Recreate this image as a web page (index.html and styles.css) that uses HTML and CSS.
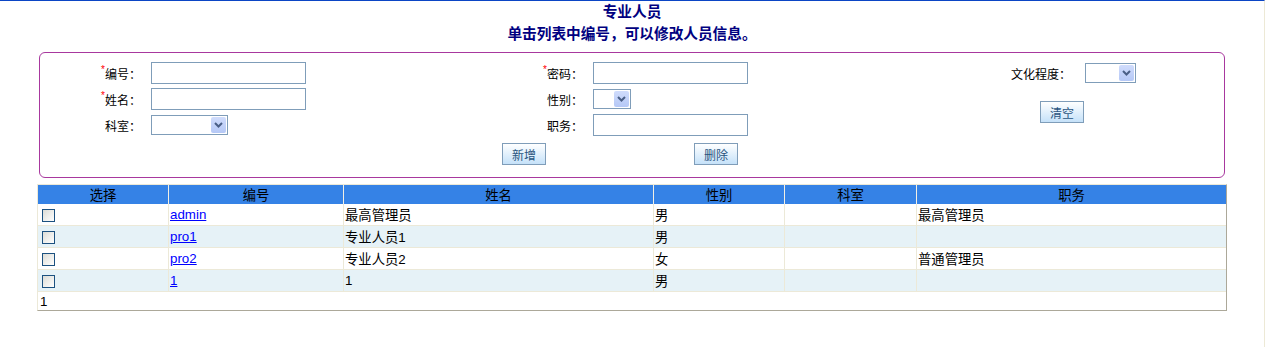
FILE: index.html
```html
<!DOCTYPE html>
<html lang="zh-CN">
  <head>
    <meta charset="utf-8" />
    <title>专业人员</title>
    <link rel="stylesheet" href="styles.css">
  </head>

  <body>
    <div class="page">
      <div class="title">专业人员</div>
      <div class="title">单击列表中编号，可以修改人员信息。</div>

      <form class="editor" onsubmit="return false">
        <label class="field-label c1"><span class="req">*</span>编号：</label>
        <div class="field c2"><input class="text-input" /></div>
        <label class="field-label c3"><span class="req">*</span>密码：</label>
        <div class="field c4"><input class="text-input" type="password" /></div>
        <label class="field-label wide c5">文化程度：</label>
        <div class="field c6">
          <span class="select select-edu"><span class="arrow"><svg width="9" height="6" viewBox="0 0 9 6"><path d="M1 1 L4.5 4.5 L8 1" fill="none" stroke="#4a5f86" stroke-width="2"/></svg></span></span>
        </div>

        <label class="field-label c1"><span class="req">*</span>姓名：</label>
        <div class="field c2"><input class="text-input" /></div>
        <label class="field-label c3">性别：</label>
        <div class="field c4">
          <span class="select select-sex"><span class="arrow"><svg width="9" height="6" viewBox="0 0 9 6"><path d="M1 1 L4.5 4.5 L8 1" fill="none" stroke="#4a5f86" stroke-width="2"/></svg></span></span>
        </div>
        <div class="clear-cell"><button class="btn" type="button">清空</button></div>

        <label class="field-label c1">科室：</label>
        <div class="field c2">
          <span class="select select-dept"><span class="arrow"><svg width="9" height="6" viewBox="0 0 9 6"><path d="M1 1 L4.5 4.5 L8 1" fill="none" stroke="#4a5f86" stroke-width="2"/></svg></span></span>
        </div>
        <label class="field-label c3">职务：</label>
        <div class="field c4"><input class="text-input" /></div>

        <div class="field c3 add-cell"><button class="btn" type="button">新增</button></div>
        <div class="field c4 del-cell"><button class="btn" type="button">删除</button></div>
      </form>

      <table class="staff">
        <thead>
          <tr>
            <th class="w-check">选择</th>
            <th class="w-id">编号</th>
            <th class="w-name">姓名</th>
            <th class="w-sex">性别</th>
            <th class="w-dept">科室</th>
            <th class="w-duty">职务</th>
          </tr>
        </thead>
        <tbody>
          <tr>
            <td class="check"><span class="checkbox"></span></td>
            <td><a href="#">admin</a></td>
            <td>最高管理员</td>
            <td>男</td>
            <td></td>
            <td>最高管理员</td>
          </tr>
          <tr class="alt">
            <td class="check"><span class="checkbox"></span></td>
            <td><a href="#">pro1</a></td>
            <td>专业人员1</td>
            <td>男</td>
            <td></td>
            <td></td>
          </tr>
          <tr>
            <td class="check"><span class="checkbox"></span></td>
            <td><a href="#">pro2</a></td>
            <td>专业人员2</td>
            <td>女</td>
            <td></td>
            <td>普通管理员</td>
          </tr>
          <tr class="alt">
            <td class="check"><span class="checkbox"></span></td>
            <td><a href="#">1</a></td>
            <td>1</td>
            <td>男</td>
            <td></td>
            <td></td>
          </tr>
        </tbody>
        <tfoot>
          <tr>
            <td colspan="6" class="pager">1</td>
          </tr>
        </tfoot>
      </table>
    </div>
  </body>
</html>
```

FILE: styles.css
```css
body {
  margin: 0;
  background: #fff;
  color: #000;
  font-family: "Liberation Sans", "Noto Sans CJK SC", sans-serif;
  font-size: 12px;
}

.page {
  width: 1265px;
  min-height: 347px;
  box-sizing: border-box;
  border-top: 1px solid #0b45c5;
  border-right: 1px solid #ede9d6;
}

.title {
  text-align: center;
  font-weight: bold;
  font-size: 14.67px;
  line-height: 22px;
  color: #000080;
}

/* edit form */
.editor {
  margin: 7px 39px 0 39px;
  padding: 7px 0;
  border: 1px solid #a8389e;
  border-radius: 6px;
  display: grid;
  grid-template-columns: 111px 340px 102px 390px 102px 1fr;
  grid-template-rows: 26px 26px 26px 32px;
  align-items: center;
}
.c1 { grid-column: 1; }
.c2 { grid-column: 2; }
.c3 { grid-column: 3; }
.c4 { grid-column: 4; }
.c5 { grid-column: 5; }
.c6 { grid-column: 6; }

.field-label {
  text-align: right;
  padding-right: 10px;
  white-space: nowrap;
}
.field-label.wide {
  padding-right: 14px;
}
.req {
  color: #f00;
  font-size: 10px;
  vertical-align: top;
  line-height: 1;
}

.field {
  display: flex;
  align-items: center;
}

.text-input {
  width: 155px;
  height: 22px;
  box-sizing: border-box;
  margin: 0;
  padding: 0 2px;
  border: 1px solid #7f9db9;
  font-size: 12px;
}

.select {
  height: 20px;
  box-sizing: border-box;
  border: 1px solid #7f9db9;
  background: #fff;
  display: inline-flex;
  justify-content: flex-end;
  align-items: center;
  padding-right: 1px;
}
.select-dept { width: 77px; }
.select-sex { width: 38px; }
.select-edu { width: 51px; }
.arrow {
  width: 15px;
  height: 16px;
  border-radius: 2px;
  background: linear-gradient(#d0dcfc, #b5c8f6);
  display: flex;
  align-items: center;
  justify-content: center;
}

.btn {
  width: 44px;
  height: 22px;
  box-sizing: border-box;
  margin: 0;
  padding: 0;
  border: 1px solid #7f9db9;
  border-radius: 0;
  background: linear-gradient(#ffffff, #c5e1f9);
  color: #29557f;
  font-family: "Liberation Sans", "Noto Sans CJK SC", sans-serif;
  font-size: 12px;
}

.clear-cell {
  grid-column: 5;
  grid-row: 2 / 4;
  display: flex;
  justify-content: flex-end;
  padding-right: 1px;
}
.add-cell { padding-left: 11px; }
.del-cell { padding-left: 101px; }

/* list */
.staff {
  margin: 6px 0 0 37px;
  width: 1190px;
  table-layout: fixed;
  border-collapse: separate;
  border-spacing: 0;
  border-top: 1px solid #ece9d8;
  border-left: 1px solid #ece9d8;
  border-right: 1px solid #aca899;
  border-bottom: 1px solid #aca899;
  font-size: 13.33px;
}
.staff th,
.staff td {
  box-sizing: border-box;
  padding: 0 1px;
  border-right: 1px solid #ece9d8;
  white-space: nowrap;
  overflow: hidden;
}
.staff th:last-child,
.staff td:last-child {
  border-right: 0;
}
.staff th {
  height: 19px;
  background: #3582e6;
  font-weight: normal;
  text-align: center;
  border-right-color: #f2efe4;
}
.w-check { width: 131px; }
.w-id { width: 175px; }
.w-name { width: 310px; }
.w-sex { width: 131px; }
.w-dept { width: 132px; }
.w-duty { width: 309px; }

.staff tbody td {
  height: 22px;
  border-bottom: 1px solid #ece9d8;
  text-align: left;
}
.staff tr.alt td {
  background: #e6f2f7;
}
.staff a {
  color: #0000ff;
}
.staff td.check {
  padding: 0;
}
.checkbox {
  display: inline-block;
  width: 13px;
  height: 13px;
  box-sizing: border-box;
  margin-left: 4px;
  vertical-align: middle;
  border: 1px solid #1c5180;
  background: linear-gradient(135deg, #dcdcd6, #ffffff);
}
.staff td.pager {
  height: 18px;
  padding-left: 2px;
  border-right: 0;
}
```
